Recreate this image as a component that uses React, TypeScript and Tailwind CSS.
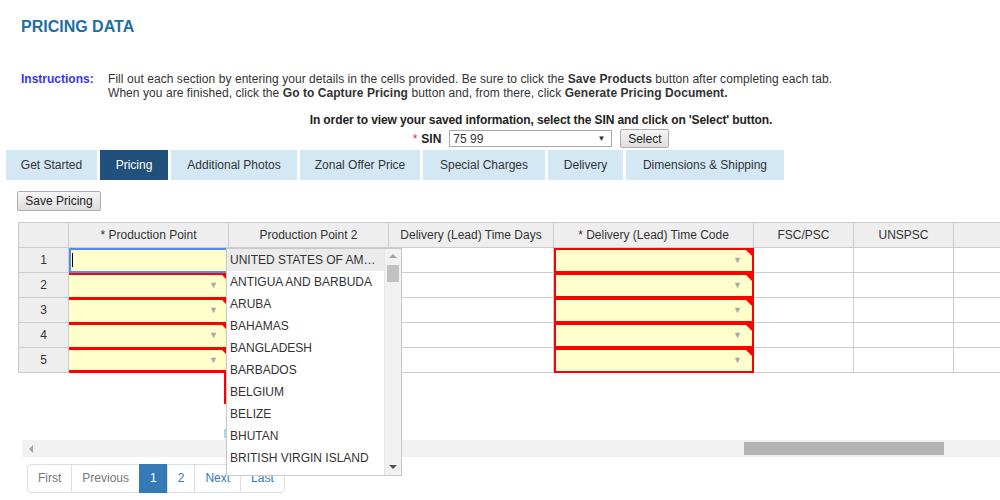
const COLS = [
  { w: 50, label: "" },
  { w: 160, label: "* Production Point" },
  { w: 160, label: "Production Point 2" },
  { w: 165, label: "Delivery (Lead) Time Days" },
  { w: 200, label: "* Delivery (Lead) Time Code" },
  { w: 100, label: "FSC/PSC" },
  { w: 100, label: "UNSPSC" },
  { w: 100, label: "" },
];

const TABS: [string, number][] = [
  ["Get Started", 91],
  ["Pricing", 68],
  ["Additional Photos", 126],
  ["Zonal Offer Price", 120],
  ["Special Charges", 122],
  ["Delivery", 75],
  ["Dimensions & Shipping", 158],
];

const COUNTRIES = [
  "UNITED STATES OF AMERICA",
  "ANTIGUA AND BARBUDA",
  "ARUBA",
  "BAHAMAS",
  "BANGLADESH",
  "BARBADOS",
  "BELGIUM",
  "BELIZE",
  "BHUTAN",
  "BRITISH VIRGIN ISLAND",
  "CANADA",
];

function Corner() {
  return (
    <span className="absolute right-0 top-0 h-0 w-0 border-l-[6px] border-t-[6px] border-l-transparent border-t-[#ff0000]" />
  );
}

function Arrow() {
  return (
    <span className="absolute right-[10px] top-[6px] text-[9px] leading-[9px] text-[#a9a9a9]">
      ▼
    </span>
  );
}

function Row({ n }: { n: number }) {
  return (
    <div className="flex h-[25px]">
      <div className="flex w-[50px] items-center justify-center border-b border-r border-[#ccc] bg-[#eee]">
        {n}
      </div>
      {n === 1 ? (
        <div className="flex w-[160px] items-center border-b border-r border-[#ccc] bg-[#ffffcc] pl-[3px] outline-2 -outline-offset-2 outline-[#4f8ef0]">
          <span className="h-[14px] w-px bg-black" />
        </div>
      ) : (
        <div
          className={`relative w-[160px] border-r border-[#ccc] border-t-2 border-t-[#ff0000] bg-[#ffffcc] ${
            n === 5 ? "border-b-[3px] border-b-[#ff0000]" : "border-b border-b-[#ff0000]"
          }`}
        >
          <Corner />
          <Arrow />
        </div>
      )}
      <div className="w-[160px] border-b border-r border-[#ccc]" />
      <div className="w-[165px] border-b border-r border-[#ccc]" />
      <div className="relative w-[200px] border-2 border-[#ff0000] bg-[#ffffcc]">
        <Corner />
        <Arrow />
      </div>
      <div className="w-[100px] border-b border-r border-[#ccc]" />
      <div className="w-[100px] border-b border-r border-[#ccc]" />
      <div className="w-[100px] border-b border-r border-[#ccc]" />
    </div>
  );
}

export default function App() {
  return (
    <div className="relative h-[500px] w-[1000px] overflow-hidden bg-white font-['Liberation_Sans',Arial,sans-serif] text-[12px] text-[#333]">
      <h1 className="mt-[17px] pl-[21px] text-[16px] font-bold leading-[20px] text-[#1c6ea4]">
        PRICING DATA
      </h1>

      <div className="mt-[35px] flex pl-[21px] leading-[14px]">
        <div className="w-[87px] font-bold text-[#3333ff]">Instructions:</div>
        <div className="tracking-[0.06px] text-[#333]">
          <div>
            Fill out each section by entering your details in the cells provided. Be sure to click the{" "}
            <b>Save Products</b> button after completing each tab.
          </div>
          <div>
            When you are finished, click the <b>Go to Capture Pricing</b> button and, from there, click{" "}
            <b>Generate Pricing Document.</b>
          </div>
        </div>
      </div>

      <div className="mt-[13px] pl-[82px] text-center font-bold leading-[14px] tracking-[-0.1px] text-[#222]">
        In order to view your saved information, select the SIN and click on 'Select' button.
      </div>

      <div className="mt-[2px] flex h-[19px] items-center justify-center pl-[82px]">
        <span className="text-[#e03030]">*</span>
        <span className="ml-[4px] font-bold text-[#222]">SIN</span>
        <div className="ml-[8px] flex h-[17px] w-[163px] items-center justify-between border border-[#a9a9a9] bg-white pl-[3px] pr-[6px]">
          <span>75 99</span>
          <span className="text-[8px]">▼</span>
        </div>
        <button className="ml-[8px] h-[19px] w-[49px] rounded-[2px] border border-[#adadad] bg-gradient-to-b from-[#f6f6f6] to-[#dedede] text-[12px] text-[#222]">
          Select
        </button>
      </div>

      <div className="mt-[2px] flex gap-[3px] pl-[6px]">
        {TABS.map(([t, w]) => (
          <div
            key={t}
            style={{ width: w }}
            className={`h-[30px] text-center leading-[30px] ${
              t === "Pricing" ? "bg-[#22507c] text-white" : "bg-[#d3e8f4] text-[#333]"
            }`}
          >
            {t}
          </div>
        ))}
      </div>

      <button className="ml-[17px] mt-[11px] h-[20px] w-[84px] rounded-[2px] border border-[#adadad] bg-gradient-to-b from-[#f6f6f6] to-[#dedede] text-[12px] text-[#222]">
        Save Pricing
      </button>

      <div className="ml-[18px] mt-[11px] w-[982px] overflow-hidden">
        <div className="w-[1100px] border-l border-t border-[#ccc]">
          <div className="flex h-[25px] bg-[#eee]">
            {COLS.map((c, i) => (
              <div
                key={i}
                style={{ width: c.w }}
                className="flex shrink-0 items-center justify-center border-b border-r border-[#ccc]"
              >
                {c.label}
              </div>
            ))}
          </div>
          {[1, 2, 3, 4, 5].map((n) => (
            <Row key={n} n={n} />
          ))}
        </div>
      </div>

      <div className="h-[67px] pl-[224px]">
        <div className="h-[31px] w-[2px] bg-[#ff0000]" />
        <div className="mt-[25px] h-[9px] w-[2px] bg-[#a8d8f0]" />
      </div>

      <div className="ml-[22px] flex h-[17px] items-center bg-[#f1f1f1]">
        <div className="flex w-[17px] justify-center">
          <span className="h-0 w-0 border-y-[4px] border-r-[4px] border-y-transparent border-r-[#a3a3a3]" />
        </div>
        <div className="w-[705px]" />
        <div className="h-[13px] w-[200px] bg-[#b4b4b4]" />
      </div>

      <div className="ml-[27px] mt-[7px] flex h-[29px]">
        {["First", "Previous", "1", "2", "Next", "Last"].map((p, i) => (
          <div
            key={p}
            className={`-ml-px border px-[10px] leading-[27px] ${i === 0 ? "ml-0 rounded-l-[4px]" : ""} ${
              i === 5 ? "rounded-r-[4px]" : ""
            } ${
              p === "1"
                ? "border-[#337ab7] bg-[#337ab7] text-white"
                : i < 2
                ? "border-[#ddd] text-[#777]"
                : "border-[#ddd] text-[#337ab7]"
            }`}
          >
            {p}
          </div>
        ))}
      </div>

      <div className="absolute left-[226px] top-[248px] flex h-[228px] w-[176px] overflow-hidden border border-[#c8c8c8] bg-white">
        <div className="min-w-0 flex-1">
          {COUNTRIES.map((c, i) => (
            <div
              key={c}
              className={`h-[22px] truncate pl-[3px] pr-[6px] leading-[22px] text-[#333] ${
                i === 0 ? "bg-[#ebebeb]" : ""
              }`}
            >
              {c}
            </div>
          ))}
        </div>
        <div className="flex w-[17px] flex-col items-center border-l border-[#e6e6e6] bg-[#f1f1f1]">
          <span className="mt-[5px] h-0 w-0 border-x-[4px] border-b-[4px] border-x-transparent border-b-[#a3a3a3]" />
          <div className="mt-[7px] h-[17px] w-[12px] bg-[#c1c1c1]" />
          <div className="flex-1" />
          <span className="mb-[6px] h-0 w-0 border-x-[4px] border-t-[4px] border-x-transparent border-t-[#505050]" />
        </div>
      </div>
    </div>
  );
}
